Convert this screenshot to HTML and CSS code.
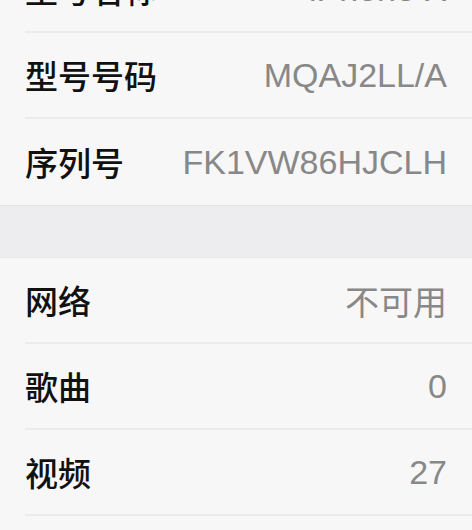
FILE: index.html
```html
<!DOCTYPE html>
<html lang="zh-CN">

<head>
    <meta charset="UTF-8">
    <meta name="viewport" content="width=device-width, initial-scale=1.0">
    <title>关于本机</title>
    <link rel="stylesheet" href="styles.css">
</head>

<body>
<div class="settings">
    <!-- Device info -->
    <div class="group group-first">
        <div class="row">
            <span class="label">型号名称</span>
            <span class="value">iPhone X</span>
        </div>
        <div class="row">
            <span class="label">型号号码</span>
            <span class="value">MQAJ2LL/A</span>
        </div>
        <div class="row">
            <span class="label">序列号</span>
            <span class="value">FK1VW86HJCLH</span>
        </div>
    </div>

    <div class="group-gap"></div>

    <!-- Media counts -->
    <div class="group">
        <div class="row">
            <span class="label">网络</span>
            <span class="value">不可用</span>
        </div>
        <div class="row">
            <span class="label">歌曲</span>
            <span class="value">0</span>
        </div>
        <div class="row">
            <span class="label">视频</span>
            <span class="value">27</span>
        </div>
    </div>
</div>
</body>

</html>
```

FILE: styles.css
```css
* {
    box-sizing: border-box;
}

body {
    margin: 0;
    padding: 0;
    background-color: #f7f7f7;
    font-family: "Noto Sans CJK SC", "Noto Sans", sans-serif;
    overflow: hidden;
}

.settings {
    width: 472px;
}

.group {
    background-color: #f7f7f7;
}

.group-first {
    margin-top: -53px;
}

.group-gap {
    height: 53px;
    background-color: #ededef;
    border-top: 1px solid #e4e4e6;
    border-bottom: 1px solid #e9e9eb;
}

.row {
    display: flex;
    justify-content: space-between;
    align-items: center;
    height: 86px;
    margin-left: 25px;
    padding-right: 25px;
    border-bottom: 2px solid #ebebeb;
}

.group-first .row:last-child {
    border-bottom: none;
}

.label {
    font-size: 33px;
    font-weight: 500;
    color: #111111;
}

.value {
    font-family: "Liberation Sans", "Noto Sans CJK SC", sans-serif;
    font-size: 34px;
    color: #888888;
}
```
